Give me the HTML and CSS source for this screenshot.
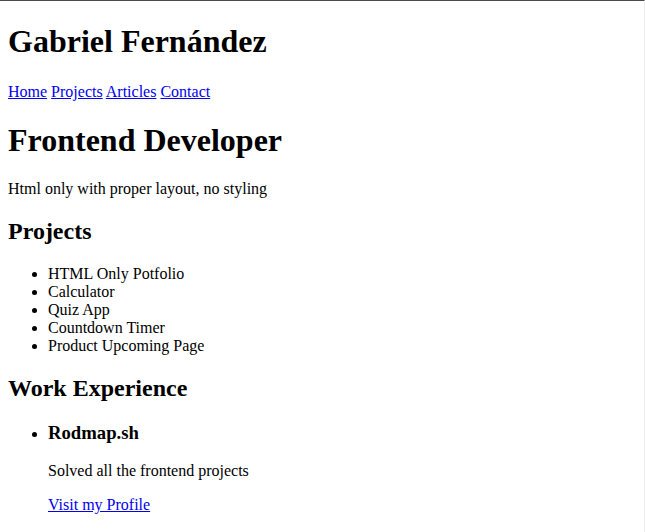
FILE: index.html
```html
<!DOCTYPE html>
<html lang="en">
<head>
<meta charset="utf-8">
<title>Gabriel Fernández</title>
<link rel="stylesheet" href="styles.css">
</head>
<body>
<header>
<h1 class="name">Gabriel Fernández</h1>
<nav class="nav"><a href="#">Home</a> <a href="#">Projects</a> <a href="#">Articles</a> <a href="#">Contact</a></nav>
</header>
<main>
<h1 class="role">Frontend Developer</h1>
<p>Html only with proper layout, no styling</p>
<h2>Projects</h2>
<ul>
<li>HTML Only Potfolio</li>
<li>Calculator</li>
<li>Quiz App</li>
<li>Countdown Timer</li>
<li>Product Upcoming Page</li>
</ul>
<h2>Work Experience</h2>
<ul>
<li>
<h3>Rodmap.sh</h3>
<p>Solved all the frontend projects</p>
<a href="#">Visit my Profile</a>
</li>
</ul>
</main>
</body>
</html>
```
FILE: styles.css
```css
html {
  font-family: "Liberation Serif", "Times New Roman", serif;
  border-top: 1px solid #4a4a4a;
  border-right: 1px solid #ececec;
  min-height: 530px;
}
body {
  margin: 0 8px 8px;
}
.name {
  margin-top: 22px;
  margin-bottom: 23px;
}
.role {
  margin-top: 20.5px;
}
a {
  color: #0000ee;
}
```
